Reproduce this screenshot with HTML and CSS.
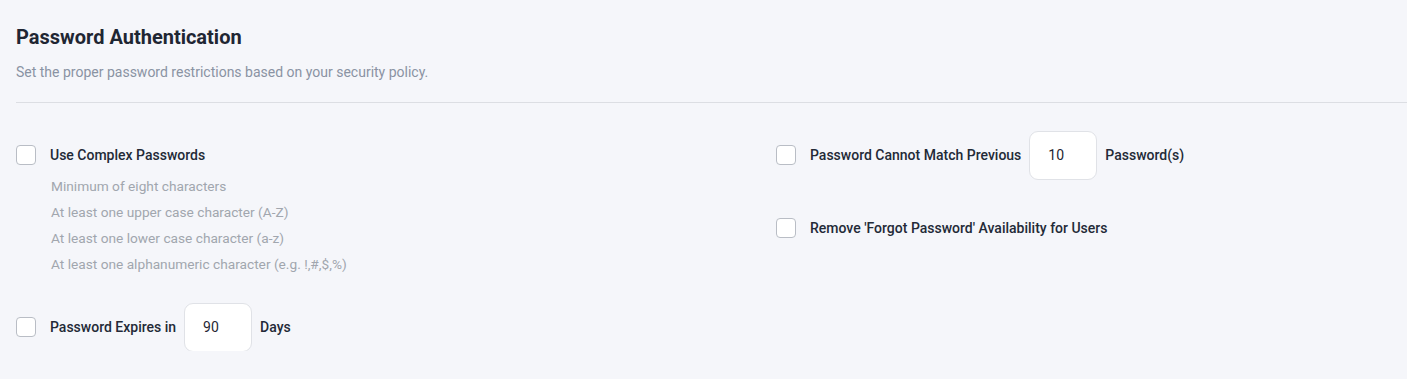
FILE: index.html
```html
<!DOCTYPE html>
<html>
<head>
<meta charset="utf-8">
<link rel="stylesheet" href="styles.css">
</head>
<body>
<section class="panel">
  <header class="head">
    <h1 class="title">Password Authentication</h1>
    <p class="subtitle">Set the proper password restrictions based on your security policy.</p>
  </header>
  <div class="grid">
    <div class="col">
      <div class="option">
        <label class="row">
          <span class="box"></span>
          <span class="label">Use Complex Passwords</span>
        </label>
        <ul class="rules">
          <li>Minimum of eight characters</li>
          <li>At least one upper case character (A-Z)</li>
          <li>At least one lower case character (a-z)</li>
          <li>At least one alphanumeric character (e.g. !,#,$,%)</li>
        </ul>
      </div>
      <div class="row expires">
        <span class="box"></span>
        <span class="label">Password Expires in</span>
        <span class="num">90</span>
        <span class="label">Days</span>
      </div>
    </div>
    <div class="col">
      <div class="row previous">
        <span class="box"></span>
        <span class="label">Password Cannot Match Previous</span>
        <span class="num">10</span>
        <span class="label">Password(s)</span>
      </div>
      <div class="row forgot">
        <span class="box"></span>
        <span class="label">Remove 'Forgot Password' Availability for Users</span>
      </div>
    </div>
  </div>
</section>
</body>
</html>
```

FILE: styles.css
```css
html, body {
  margin: 0;
  padding: 0;
  background: #f5f6fa;
}
body {
  font-family: Roboto, "Noto Sans", sans-serif;
  color: #1f2633;
}
.panel {
  padding: 0 0 0 16px;
}
.head {
  border-bottom: 1px solid #dcdee3;
  padding: 25px 0 22px;
}
.title {
  margin: 0;
  font-size: 20px;
  line-height: 24px;
  font-weight: 700;
  color: #1f2633;
}
.subtitle {
  margin: 15px 0 0;
  font-size: 14px;
  line-height: 16px;
  color: #8a93a3;
}
.grid {
  display: grid;
  grid-template-columns: 760px 1fr;
  padding-top: 28px;
}
.col {
  display: flex;
  flex-direction: column;
}
.row {
  display: flex;
  align-items: center;
  height: 48px;
}
.box {
  width: 18px;
  height: 18px;
  border: 1px solid #b9bdc5;
  border-radius: 4px;
  background: #fff;
  flex: none;
  margin-right: 14px;
}
.label {
  font-size: 14px;
  font-weight: 500;
  color: #232a37;
}
.rules {
  list-style: none;
  margin: -6px 0 0 35px;
  padding: 0;
}
.rules li {
  font-size: 13.7px;
  line-height: 26px;
  color: #a1a6ae;
}
.expires {
  margin-top: 26px;
}
.num {
  width: 68px;
  height: 49px;
  box-sizing: border-box;
  border: 1px solid #e0e2e7;
  border-radius: 9px;
  background: #fff;
  font-size: 14px;
  color: #1f2633;
  display: flex;
  align-items: center;
  padding-left: 18px;
  margin: 0 8px 0 8px;
}
.forgot {
  margin-top: 25px;
}
```
